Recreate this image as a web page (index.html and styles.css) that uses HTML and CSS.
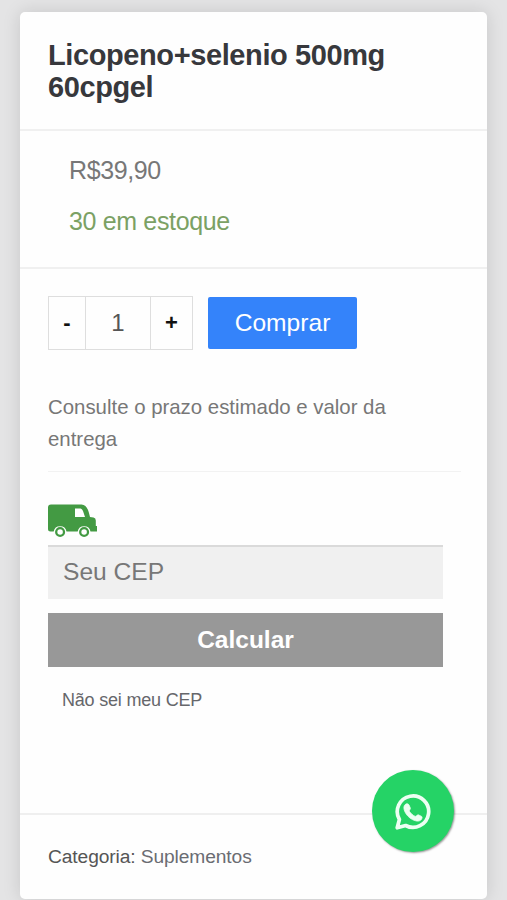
FILE: index.html
```html
<!DOCTYPE html>
<html lang="pt-BR">
<head>
<meta charset="utf-8">
<meta name="viewport" content="width=device-width, initial-scale=1">
<title>Licopeno+selenio 500mg 60cpgel</title>
<link rel="stylesheet" href="styles.css">
</head>
<body>
<main class="card">
  <header class="heading">
    <h1 class="title">Licopeno+selenio 500mg 60cpgel</h1>
  </header>
  <section class="pricing">
    <p class="price">R$39,90</p>
    <p class="stock">30 em estoque</p>
  </section>
  <section class="purchase">
    <div class="actions">
      <div class="quantity">
        <button class="step" type="button">-</button>
        <span class="amount">1</span>
        <button class="step" type="button">+</button>
      </div>
      <button class="buy" type="button">Comprar</button>
    </div>
    <p class="hint">Consulte o prazo estimado e valor da entrega</p>
    <div class="shipping">
      <svg class="van" viewBox="0 0 50 34">
        <path fill="#439a43" d="M3 .5H33.500C38.500 .5 40.500 6 42 13L45.500 13.500Q47.800 14 47.800 16.500V22H49V27.500H42.500A6.500 6.500 0 0 0 29.700 27.500H18.500A6.500 6.500 0 0 0 5.700 27.500H2.500Q0 27.500 0 25V3.500Q0 .5 3 .5Z"/>
        <path fill="#fff" d="M27 4.500H32.500Q34 4.500 35 7L37 13H27Z"/>
        <g fill="#fff" stroke="#439a43" stroke-width="2.300"><circle cx="12.100" cy="28" r="3.900"/><circle cx="36.100" cy="28" r="3.900"/></g>
      </svg>
      <input class="cep" type="text" placeholder="Seu CEP">
      <button class="calculate" type="button">Calcular</button>
      <a class="lookup">Não sei meu CEP</a>
    </div>
  </section>
  <footer class="meta">Categoria: <a class="category">Suplementos</a></footer>
</main>
<a class="whatsapp" aria-label="WhatsApp">
  <svg class="whatsapp-icon" viewBox="0 0 36 36">
    <path fill="none" stroke="#edfff3" stroke-width="3.700" stroke-linejoin="round" d="M2.200 33.800L4.400 25.500A15.700 15.700 0 1 1 10.600 31.500Z"/>
    <path fill="#edfff3" stroke="#edfff3" stroke-width=".8" stroke-linejoin="round" d="M10.500 10.300C11.800 9.500 13.400 9.800 14 11L15.300 14C15.700 15.200 13.900 16.300 14.400 17.300C15.700 19.500 17.800 21.300 20.200 22.400C21.300 22.800 22.300 20.500 23.500 20.900L26.600 22.400C27.600 23 26.900 25.200 25.800 26.100C23.700 27.800 20.800 27.200 17.500 25.600C13.800 23.700 11 20.400 9.700 17.300C8.500 14.300 8.500 11.800 10.500 10.300Z"/>
  </svg>
</a>
</body>
</html>
```
FILE: styles.css
```css
* { box-sizing: border-box; }

body {
  margin: 0;
  height: 900px;
  padding: 12px 20px 0;
  overflow: hidden;
  background: #e4e4e5;
  font-family: "Liberation Sans", Arial, sans-serif;
  color: #777;
}

h1, p { margin: 0; }
button, input { font-family: inherit; margin: 0; border: 0; padding: 0; }

.card {
  width: 467px;
  height: 887px;
  display: flex;
  flex-direction: column;
  background: #fefefe;
  border-radius: 5px;
  box-shadow: 0 0 18px rgba(0, 0, 0, .13);
}

.heading { height: 119px; padding: 28px 28px 0; border-bottom: 2px solid #f0f0f0; }
.title { font-size: 29px; line-height: 31.500px; letter-spacing: -.4px; color: #37383c; }

.pricing { height: 138px; padding: 21px 48px 0 49px; border-bottom: 2px solid #f0f0f0; }
.price { font-size: 25px; line-height: 36px; letter-spacing: -.4px; }
.stock { margin-top: 15px; font-size: 25px; line-height: 36px; letter-spacing: -.35px; color: #7ba164; }

.purchase { height: 546px; padding: 27px 26px 0 28px; border-bottom: 2px solid #efefef; }
.actions { display: flex; align-items: center; gap: 15px; height: 54px; }
.quantity {
  display: grid;
  grid-template-columns: 36px 66px 41px;
  height: 54px;
  width: 145px;
  border: 1px solid #dedede;
}
.step { background: none; color: #111; font-size: 22px; font-weight: 700; }
.amount {
  border: solid #dedede;
  border-width: 0 1px;
  font-size: 24px;
  line-height: 52px;
  text-align: center;
  color: #555;
}
.buy {
  width: 149px;
  height: 52px;
  border-radius: 2px;
  background: #3483fa;
  color: #fff;
  font-size: 24.600px;
}

.hint {
  margin-top: 41px;
  height: 81px;
  padding-right: 20px;
  border-bottom: 1px solid #f2f2f2;
  font-size: 20.400px;
  line-height: 32px;
}

.shipping { display: flex; flex-direction: column; width: 395px; padding-top: 32px; }
.van { display: block; width: 50px; height: 34px; }
.cep {
  margin-top: 7px;
  height: 54px;
  padding: 0 15px 2px;
  border-top: 2px solid #dadada;
  border-radius: 0;
  background: #f0f0f0;
  font-size: 24.600px;
}
.cep::placeholder { color: #777; opacity: 1; }
.calculate {
  margin-top: 14px;
  height: 54px;
  background: #989898;
  color: #fff;
  font-size: 24.500px;
  font-weight: 700;
}
.lookup { margin: 22px 0 0 14px; font-size: 18px; line-height: 22px; letter-spacing: -.2px; color: #66676b; }

.meta { padding: 30px 28px 0; font-size: 19.200px; line-height: 24px; letter-spacing: -.1px; color: #555; }
.category { color: #6a6c72; }

.whatsapp {
  position: absolute;
  left: 372px;
  top: 770px;
  width: 82px;
  height: 82px;
  display: grid;
  place-items: center;
  padding-top: 2px;
  border-radius: 50%;
  background: #25d366;
  box-shadow: 1px 1px 2px rgba(0, 0, 0, .4);
}
.whatsapp-icon { width: 36px; height: 36px; }
```
